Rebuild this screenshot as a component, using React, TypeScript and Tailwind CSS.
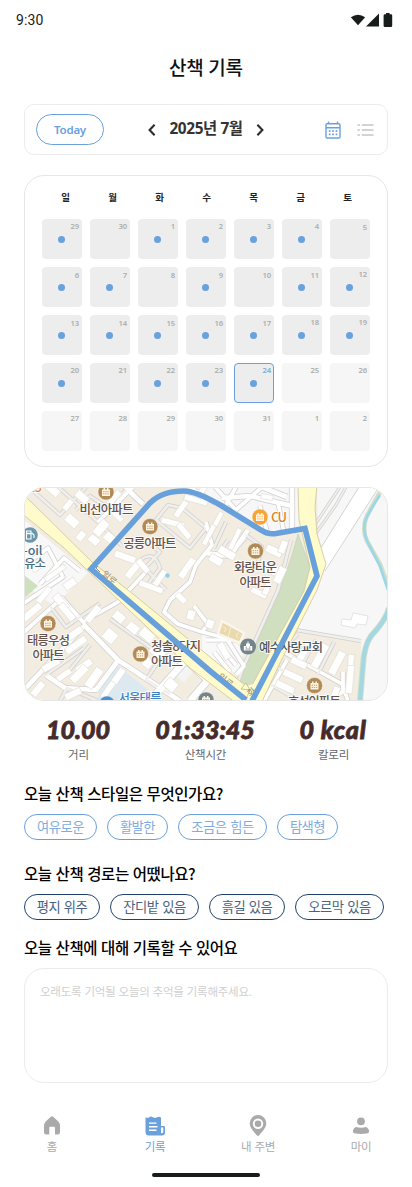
import React from 'react';

const KR = "font-['Noto_Sans_CJK_KR',sans-serif]";

/* ---------- Status bar ---------- */
function StatusBar() {
  return (
    <div className="flex h-10 items-center justify-between pl-4 pr-[19px]">
      <span className="font-[Roboto,sans-serif] text-sm leading-5 tracking-[0.15px] text-[#1d1b20]">9:30</span>
      <svg width="43" height="16" viewBox="350 12 43 16" fill="#171d1b">
        <path d="M350.8 17.2Q358 12.2 365.2 17.2L358 25.3Z" />
        <path d="M379 13.5V26.5H366Z" />
        <path d="M386 13h3.6v1.2h1.4q1.2 0 1.2 1.2v10.4q0 1.2-1.2 1.2h-6.2q-1.2 0-1.2-1.2V15.400q0-1.200 1.200-1.200H386Z" />
      </svg>
    </div>
  );
}

/* ---------- Month toolbar ---------- */
function Chevron({ d }: { d: string }) {
  return (
    <svg width="8" height="14" viewBox="0 0 8 14" fill="none" stroke="#2d2d2d" strokeWidth="2.1">
      <path d={d} />
    </svg>
  );
}

function MonthBar() {
  return (
    <div className="mx-6 mt-[21px] flex h-[51px] items-center rounded-[10px] border border-[#ececec] pl-[11px] pr-[13px]">
      <button className="h-[31px] w-[68px] rounded-full border border-[#6aa1dd] font-['Noto_Sans',sans-serif] text-[11.5px] font-semibold leading-none tracking-[-0.25px] text-[#6aa1dd]">
        Today
      </button>
      <div className="ml-[44px] flex items-center">
        <Chevron d="M6.600 1.800L1.600 7L6.600 12.200" />
        <span className="mx-[12px] -mt-px w-[76px] whitespace-nowrap text-center font-['Noto_Sans','Noto_Sans_CJK_KR',sans-serif] text-[15.400px] font-bold leading-6 tracking-[-0.4px] text-[#333]">
          2025년 7월
        </span>
        <Chevron d="M1.400 1.800L6.400 7L1.400 12.200" />
      </div>
      <div className="ml-auto flex items-center gap-4 pt-px">
        <svg width="16" height="18" viewBox="0 0 16 18" fill="none" stroke="#6aa1dd" strokeWidth="1.400">
          <rect x="1" y="2.800" width="14" height="14.200" rx="1.200" />
          <path d="M1 6.800H15M3.500 .4V3M12.500 .4V3" />
          <path d="M3.800 10.200H12.600M3.800 13.400H12.600" strokeWidth="1.800" strokeDasharray="1.700 1.700" />
        </svg>
        <svg width="17" height="14" viewBox="0 0 17 14" stroke="#d3d3d3" strokeWidth="1.900">
          <path d="M.5 2H2.900M.5 7H2.900M.5 12H2.900M4.800 2H16.500M4.800 7H16.500M4.800 12H16.500" />
        </svg>
      </div>
    </div>
  );
}

/* ---------- Calendar ---------- */
const weekdays = ['일', '월', '화', '수', '목', '금', '토'];
const days = [
  29, 30, 1, 2, 3, 4, 5, 6, 7, 8, 9, 10, 11, 12, 13, 14, 15, 16, 17, 18, 19, 20, 21, 22, 23, 24, 25, 26,
  27, 28, 29, 30, 31, 1, 2,
];
const walked = new Set([0, 2, 3, 4, 5, 7, 8, 10, 12, 13, 14, 15, 16, 17, 18, 19, 20, 21, 23, 24, 25]);
const raised = new Set([13, 19, 20]);
const TODAY = 25;

function Day({ index, day }: { index: number; day: number }) {
  const today = index === TODAY;
  const tone = today
    ? 'border border-[#6aa1dd] bg-[#ededed] text-[#7dabde]'
    : index > TODAY
      ? 'bg-[#f6f6f6] text-[#adadad]'
      : 'bg-[#ededed] text-[#adadad]';
  const inset = today ? 'pr-[2px] pt-[2px]' : index === 6 || (index > 6 && index < 19 && !raised.has(index)) ? 'pr-[3px] pt-1' : 'pr-[3px] pt-[3px]';
  return (
    <div className={`flex h-10 w-10 flex-col rounded ${tone} ${inset}`}>
      <span className="text-right font-['Noto_Sans',sans-serif] text-[7.700px] font-semibold leading-[9px] tracking-[-0.2px]">{day}</span>
      {walked.has(index) && (
        <span className={`h-[7px] w-[7px] rounded-full bg-[#6aa1dd] ${today ? 'ml-[15px]' : 'ml-4'} ${inset.includes('pt-1') ? 'mt-1' : 'mt-[5px]'}`} />
      )}
    </div>
  );
}

function Calendar() {
  return (
    <div className="mx-6 mt-5 h-[292px] rounded-[20px] border border-[#e6e6e6] px-[17px] pt-[14px]">
      <div className={`flex ${KR} text-[9.500px] font-bold leading-[14px] text-[#222]`}>
        {weekdays.map((w) => (
          <span key={w} className="w-[47px] shrink-0 text-center">{w}</span>
        ))}
      </div>
      <div className="mt-[15px] grid grid-cols-[repeat(7,40px)] gap-2">
        {days.map((d, i) => (
          <Day key={i} index={i} day={d} />
        ))}
      </div>
    </div>
  );
}

/* ---------- Route map ---------- */
const lanes: [string, number][] = [
  ['M58 487L98 522L122 546', 3],
  ['M30 488L60 515L86 487', 3],
  ['M98 522L133 487', 4],
  ['M120 480Q131 494 143 504', 5],
  ['M76 510L90 496L108 508L126 490', 3],
  ['M168 505L156 520L190 548L206 528L182 508Z', 3],
  ['M150 544L160 552L145 568L166 590', 3],
  ['M206 522L212 545L196 565L190 582L170 600', 4],
  ['M138 562Q154 548 160 568L148 584', 3],
  ['M228 540L214 560L232 552L246 538', 3],
  ['M205 553L230 556L248 530', 5],
  ['M226 522L214 548', 3],
  ['M246 535L262 547L256 570', 3],
  ['M291 540L278 590L242 670L236 688', 3],
  ['M190 487L215 503M215 487L236 510L262 487M236 487L226 505', 4],
  ['M222 498L250 496L292 506M262 487L287 497M292 487V534', 5],
  ['M260 506L268 535M278 503L284 532', 4],
  ['M24 566L48 548L63 577L24 603M40 584L64 558L80 571', 4],
  ['M24 632L62 598L83 622L118 602L146 572', 4],
  ['M50 606L66 627L100 603', 3],
  ['M83 624L118 660L180 701', 5],
  ['M24 690L84 626M46 675L65 688L96 690L117 662', 5],
  ['M64 677L90 645M46 675L84 648M60 701L67 688L98 701', 3],
  ['M110 619L162 656L146 680L170 694', 3],
  ['M170 600L164 612L178 624L202 632L208 624L194 606', 4],
  ['M154 696L186 660L208 680L190 701', 7],
  ['M202 632L226 638L244 666L236 675', 4],
  ['M214 652L230 672M222 648L236 665M206 640L240 640', 4],
  ['M296 630L361 641', 3],
  ['M280 650L342 684L348 701', 4],
  ['M298 634L282 650M316 640L300 668M334 642L318 674', 3],
  ['M287 660L264 701M343 672V692L324 701', 4],
  ['M270 684L294 698M278 668L302 680', 3],
  ['M346 487L336 505L316 533M340 487L330 502L316 523', 2],
  ['M24 700L46 716', 5],
];

// x, y (centre), width, height, rotation
const buildings: [number, number, number, number, number][] = [
  [53, 490, 14, 8, 42], [82, 497, 14, 8, 42], [72, 521, 14, 9, 42], [68, 505, 12, 6, 130], [101, 528, 17, 9, 130],
  [111, 539, 15, 9, 40], [94, 540, 11, 8, 40], [81, 536, 10, 7, 130], [114, 498, 17, 6, 130], [117, 516, 14, 5, 45],
  [173, 523, 24, 6, 15], [181, 509, 19, 6, 125], [184, 531, 18, 6, 50], [196, 500, 24, 6, 15], [202, 491, 16, 6, 120],
  [125, 557, 22, 7, 20], [133, 570, 19, 7, 130], [143, 566, 16, 6, 50], [151, 587, 25, 6, 20], [160, 578, 18, 6, 125],
  [187, 568, 23, 7, 125], [227, 553, 18, 8, 30], [216, 560, 14, 8, 30],
  [215, 525, 29, 5, 118], [235, 539, 23, 5, 115], [209, 535, 22, 5, 118],
  [274, 551, 17, 8, 25], [283, 547, 13, 7, 110], [270, 569, 15, 9, 25], [280, 575, 17, 8, 115],
  [259, 593, 17, 6, 25], [267, 588, 14, 6, 110], [267, 497, 12, 5, 10],
  [44, 595, 19, 6, 130], [61, 602, 18, 8, 50], [67, 612, 20, 7, 50], [93, 614, 19, 7, 130], [32, 612, 22, 7, 140],
  [71, 636, 27, 7, 145], [76, 645, 24, 7, 145], [51, 665, 19, 7, 150], [84, 666, 18, 7, 145], [79, 674, 20, 8, 135],
  [94, 678, 22, 9, 125], [64, 675, 16, 6, 145], [73, 694, 17, 7, 155], [38, 689, 16, 7, 130],
  [110, 636, 13, 12, 40], [119, 617, 12, 9, 40], [133, 628, 12, 9, 40], [147, 635, 15, 10, 40], [158, 651, 15, 12, 40],
  [171, 685, 12, 11, 40], [181, 598, 12, 6, 45], [191, 615, 8, 10, 15], [148, 663, 9, 10, 40],
  [117, 678, 22, 7, 125], [108, 690, 19, 6, 125],
  [304, 652, 19, 7, 120], [320, 656, 26, 8, 118], [337, 663, 25, 8, 118],
  [299, 663, 17, 7, 25], [293, 676, 21, 7, 25], [285, 687, 20, 7, 25], [350, 678, 31, 7, 95], [351, 660, 11, 6, 95],
  [335, 694, 15, 7, 110], [210, 624, 9, 8, 110], [224, 651, 18, 7, 60],
  [55, 573, 24, 5, -35], [70, 584, 13, 8, -35], [38, 566, 14, 7, -35],
];

function Pin({ x, y, color, r = 8 }: { x: number; y: number; color: string; r?: number }) {
  return (
    <g>
      <circle cx={x} cy={y} r={r} fill={color} stroke="#fff" strokeOpacity=".6" strokeWidth=".7" />
      <path transform={`translate(${x} ${y})`} d="M-4 -2.500H-2.500V-4H-.9V-2.500H.9V-4H2.500V-2.500H4V4H-4Z" fill="#fff4df" />
      <path transform={`translate(${x} ${y})`} d="M-2.800 -.3H2.800M-2.800 1.900H2.800" stroke={color} strokeWidth=".8" strokeDasharray="1.300 .8" />
    </g>
  );
}

function Label({ x, y, w, size = 12.5, color = '#64524b', children }: { x: number; y: number; w: number; size?: number; color?: string; children: string }) {
  return (
    <text
      x={x - w / 2}
      y={y}
      textLength={w}
      fontSize={size}
      fill={color}
      stroke="#fff"
      strokeOpacity=".8"
      strokeWidth="2"
      strokeLinejoin="round"
      paintOrder="stroke"
      className="font-['Noto_Sans_CJK_KR',sans-serif] font-medium"
    >
      {children}
    </text>
  );
}

function RouteMap() {
  const yellowMain = 'M20 491L92 562L133 594L210 657L246 686L262 701L240 706L190 668L63 547L20 512Z';
  const yellowSide = 'M298 485L299 520L303 537L310 567L304 591L252 685L244 704H261L280 663L317 590L326 564L317 534L315 507L317 485Z';
  return (
    <div className="mx-6 mt-5 h-[214px] overflow-hidden rounded-[20px] border border-[#e6e6e6]">
      <svg className="block" width="362" height="212" viewBox="25 488 362 212">
        <rect x="24" y="487" width="364" height="214" fill="#f2ece1" />
        <path d="M187 487L222 506L268 535L303 531V487Z" fill="#f7f7f7" />
        <path d="M317 487L318 534L326 564L317 590L296 628L361 640L362 701H388V487Z" fill="#f7f7f7" />
        <path d="M24 520L88 573L54 606L24 584Z" fill="#f8f8f8" />
        <path d="M24 575L38 586L24 598Z" fill="#cfe0bf" />
        <path d="M112 661L148 690L140 701H96Z" fill="#dce9f1" />
        <path d="M202 632L225 634L244 650L237 675L202 652Z" fill="#f8f8f8" />
        <path d="M176 656L198 666L184 682L170 672Z" fill="#f4f4f4" />
        <path d="M298 534L310 567L305 590L252 685L236 687L280 590L292 555Z" fill="#cfdfc0" stroke="#c4cdb8" strokeWidth=".6" />
        <path d="M359 487L319 551L326 571L379 487Z" fill="#fff" />
        <path d="M359 487L319 551M379 487L325 571" stroke="#cdcdcd" strokeWidth=".9" />
        {lanes.map(([d, w], i) => (
          <path key={i} d={d} fill="none" stroke="#d0d0d0" strokeWidth={w + 1.2} strokeLinejoin="round" />
        ))}
        {lanes.map(([d, w], i) => (
          <path key={i} d={d} fill="none" stroke={w < 4 ? '#f1efeb' : '#fff'} strokeWidth={w - 0.3} strokeLinejoin="round" />
        ))}
        {buildings.map(([x, y, w, h, a], i) => (
          <rect key={i} x={x - w / 2} y={y - h / 2} width={w} height={h} transform={`rotate(${a} ${x} ${y})`} fill="#fff" stroke="#e3dfd7" strokeWidth=".7" />
        ))}
        <path d="M342 619L351 620L353 613L368 616L366 625L357 624L355 628L341 625Z" fill="#fff" stroke="#dedede" strokeWidth=".8" />
        <path d="M222 621L244 633L240 643L218 634Z" fill="#ead9ad" stroke="#f9f6ee" strokeWidth="2.500" />
        <path d="M231 626L228 638M223 627Q228 628 224 632M239 633Q234 634 238 638" fill="none" stroke="#faf1d6" strokeWidth=".9" />
        <path d="M380 492Q372 506 366 518Q362 531 367 541L380 564L389 588" fill="none" stroke="#d3dfca" strokeWidth="4.500" />
        <path d="M380 495Q371 508 365 521Q363 532 367 541L380 566L388 590" fill="none" stroke="#9dd7e6" strokeWidth="2.800" />
        <path d="M389 608Q386 620 371 636Q364 646 363 665L360 701" fill="none" stroke="#d2dfc5" strokeWidth="6" />
        <path d="M389 608Q386 620 371 636Q364 646 363 665L360 701" fill="none" stroke="#a3d7e4" strokeWidth="4.200" />
        <g fill="#fffbcb" stroke="#d4caa0" strokeWidth=".9">
          <path d={yellowMain} />
          <path d={yellowSide} />
        </g>
        <path d="M253 684L246 686L254 693L260 688Z" fill="#fffbcb" />
        <path d="M241 689L246 683L250 690Z" fill="#fffbcb" stroke="#b9b49d" strokeWidth=".8" />
        <circle cx="167.500" cy="575.500" r="2.200" fill="#8fd0e8" />

        <g className="font-['Noto_Sans_CJK_KR',sans-serif]" fontSize="9" fill="#918d78">
          <text x="101" y="575" transform="rotate(40 101 575)">일로</text>
          <text x="217" y="678" transform="rotate(38 217 678)">일로</text>
          <text x="250" y="697" transform="rotate(-35 250 697)">화</text>
          <path d="M100 572L96 568L98 566" fill="none" stroke="#918d78" />
        </g>

        <Pin x={106} y={492} color="#b28a56" />
        <Pin x={150} y={526.5} color="#b28a56" />
        <Pin x={255.500} y={551} color="#b28a56" />
        <Pin x={48} y={623.500} color="#b28a56" />
        <Pin x={140.500} y={654} color="#b28a56" />
        <Pin x={314.500} y={685.500} color="#b28a56" />
        <Pin x={206} y={700} color="#748489" />
        <Pin x={107} y={704} color="#4b91d0" />
        <Pin x={260} y={517} color="#f6a638" />
        <g>
          <circle cx="30" cy="535" r="7.800" fill="#6996aa" />
          <path d="M26.500 531H31V539H26.500ZM31.800 533L34 535V538" fill="none" stroke="#fff" strokeWidth="1.100" />
          <path d="M27 533.500H31" stroke="#fff" strokeWidth="1.500" />
        </g>
        <g>
          <circle cx="248" cy="646.500" r="8" fill="#748489" />
          <path d="M243.800 650.500V646H246V643.500H247.500V641.500H248.500V643.500H250V646H252.200V650.500Z" fill="#fff" />
          <path d="M246.200 646.500V650.500M249.800 646.500V650.500M248 648V650.500" stroke="#748489" strokeWidth=".7" />
        </g>

        <Label x={106.500} y={513.500} w={54}>비선아파트</Label>
        <Label x={150} y={547.500} w={53}>공릉아파트</Label>
        <Label x={279} y={522} w={16} size={13} color="#de842b">CU</Label>
        <Label x={255.500} y={572} w={43}>화랑타운</Label>
        <Label x={255.500} y={587} w={32}>아파트</Label>
        <Label x={48.500} y={644.500} w={43}>태릉우성</Label>
        <Label x={48.500} y={659.500} w={32}>아파트</Label>
        <Label x={176} y={650.500} w={50}>청솔8단지</Label>
        <Label x={167} y={665.500} w={32}>아파트</Label>
        <Label x={291} y={651.500} w={64} color="#4b555b">예수사랑교회</Label>
        <Label x={314.500} y={706} w={53}>효성아파트</Label>
        <Label x={140} y={702.500} w={43} color="#3d83c8">서울태릉</Label>
        <Label x={33} y={554.500} w={19} color="#456f85">-oil</Label>
        <Label x={35} y={568} w={22} color="#456f85">유소</Label>
        <Label x={36} y={492} w={12} color="#e08837">25</Label>

        <path
          d="M246 700L210 671L91 569L150 503Q162 491 184 491Q196 491 222 506L261 530Q267 534.500 276 533.500L305 528.500L317 576L252 701"
          fill="none"
          stroke="#68a0dc"
          strokeWidth="5.600"
          strokeLinejoin="miter"
        />
      </svg>
    </div>
  );
}

/* ---------- Walk stats ---------- */
function Stat({ value, label, tracking = '' }: { value: string; label: string; tracking?: string }) {
  return (
    <div className="flex flex-col items-center">
      <span className={`whitespace-nowrap font-[Lato,sans-serif] text-[25px] font-black italic leading-[28px] text-[#462b2b] [-webkit-text-stroke:0.8px_#462b2b] ${tracking}`}>{value}</span>
      <span className={`mt-[3px] pl-px ${KR} text-[11.500px] leading-4 tracking-[-0.2px] text-[#666]`}>{label}</span>
    </div>
  );
}

function Stats() {
  return (
    <div className="mx-6 mt-[14px] grid h-[60px] grid-cols-[108px_146px_110px]">
      <Stat value="10.00" label="거리" />
      <Stat value="01:33:45" label="산책시간" tracking="tracking-[-0.1px]" />
      <Stat value="0 kcal" label="칼로리" tracking="tracking-[0.8px]" />
    </div>
  );
}

/* ---------- Questions ---------- */
function Heading({ children }: { children: string }) {
  return <h2 className={`${KR} whitespace-nowrap text-[15.500px] font-medium leading-[23px] tracking-[-0.4px] [word-spacing:0.8px] text-black`}>{children}</h2>;
}

function Chip({ width, tone, children }: { width: string; tone: string; children: string }) {
  return (
    <button className={`flex h-[26px] shrink-0 items-center justify-center whitespace-nowrap rounded-full border pb-px ${KR} text-[13.300px] leading-none tracking-[-0.5px] [word-spacing:1.200px] ${width} ${tone}`}>
      {children}
    </button>
  );
}

const blue = 'border-[#6aa1dd] text-[#7fade0]';
const navy = 'border-[#1f436b] text-[#466282]';

/* ---------- Bottom navigation ---------- */
function NavItem({ label, active = false, children }: { label: string; active?: boolean; children: React.ReactNode }) {
  return (
    <div className={`flex flex-1 flex-col items-center ${active ? 'text-[#6aa1dd]' : 'text-[#aaa]'}`}>
      <svg width="24" height="24" viewBox="0 0 24 24" fill="currentColor">{children}</svg>
      <span className={`pl-px ${KR} text-[11.500px] leading-4 tracking-[-0.3px] [word-spacing:0.800px]`}>{label}</span>
    </div>
  );
}

function BottomNav() {
  return (
    <nav className="mt-[31px] flex h-[59px]">
      <NavItem label="홈">
        <path d="M10.900 2.700Q12 1.600 13.100 2.700L18.300 7.400Q20 9.200 20 11.500V18.200Q20 20.500 17.800 20.500H15V13.800Q15 12.800 14 12.800H10.300Q9.300 12.800 9.300 13.800V20.500H6.300Q4 20.500 4 18.200V11.500Q4 9.200 5.700 7.400Z" />
      </NavItem>
      <NavItem label="기록" active>
        <path fillRule="evenodd" d="M2.500 3.200Q4.500 4.500 6.200 3.200Q8 2 9.800 3.200Q12 4.200 14 3.200Q16 2 18 3.400V12H20.600Q22 12 22 13.400V18.500Q22 21.500 19 21.500H6Q2.500 21.500 2.500 18ZM6 8.400V9.800H13.500V8.400ZM6 12V13.400H14.500V12ZM6 15.600V17H13.500V15.600ZM18 13.600V19.300Q20.300 19.600 20.300 17.800V13.600Z" />
      </NavItem>
      <NavItem label="내 주변">
        <path fillRule="evenodd" d="M12 1A8.300 8.300 0 0 1 20.300 9.300C20.300 14 15.500 18.500 13.300 21.200Q12 22.700 10.700 21.200C8.500 18.500 3.700 14 3.700 9.300A8.300 8.300 0 0 1 12 1ZM12 4.500A5.200 5.200 0 1 0 12 14.900A5.200 5.200 0 1 0 12 4.500Z" />
        <circle cx="12" cy="9.700" r="3.300" />
      </NavItem>
      <NavItem label="마이">
        <circle cx="12" cy="7.300" r="3.900" />
        <path d="M7 13Q12 14.500 17 13Q20 14 20 17.700Q20 19.400 17.500 19.600Q12 20.400 6.500 19.600Q4 19.400 4 17.700Q4 14 7 13Z" />
      </NavItem>
    </nav>
  );
}

export default function App() {
  return (
    <div className="h-[1187px] w-[412px] overflow-hidden bg-white">
      <StatusBar />
      <h1 className={`mt-[12px] h-[31px] text-center ${KR} text-[19px] font-medium leading-[30px] text-[#111]`}>산책 기록</h1>
      <MonthBar />
      <Calendar />
      <RouteMap />
      <Stats />
      <section className="mx-6 mt-[7px]">
        <Heading>오늘 산책 스타일은 무엇인가요?</Heading>
        <div className="mt-[9px] flex gap-[10px]">
          <Chip width="w-[73px]" tone={blue}>여유로운</Chip>
          <Chip width="w-[61px]" tone={blue}>활발한</Chip>
          <Chip width="w-[89px]" tone={blue}>조금은 힘든</Chip>
          <Chip width="w-[61px]" tone={blue}>탐색형</Chip>
        </div>
      </section>
      <section className="mx-6 mt-[22px]">
        <Heading>오늘 산책 경로는 어땠나요?</Heading>
        <div className="mt-[9px] flex gap-[10px]">
          <Chip width="w-[76px]" tone={navy}>평지 위주</Chip>
          <Chip width="w-[89px]" tone={navy}>잔디밭 있음</Chip>
          <Chip width="w-[76px]" tone={navy}>흙길 있음</Chip>
          <Chip width="w-[89px]" tone={navy}>오르막 있음</Chip>
        </div>
      </section>
      <section className="mx-6 mt-4">
        <Heading>오늘 산책에 대해 기록할 수 있어요</Heading>
        <div className={`mt-[9px] h-[115px] rounded-[20px] border border-[#ececec] px-[15px] pt-[14px] ${KR} text-[11.500px] leading-4 tracking-[-0.25px] [word-spacing:0.800px] text-[#d0d0d0]`}>
          오래도록 기억될 오늘의 추억을 기록해주세요.
        </div>
      </section>
      <BottomNav />
      <div className="mx-auto h-1 w-[108px] rounded-full bg-[#171d1b]" />
    </div>
  );
}
